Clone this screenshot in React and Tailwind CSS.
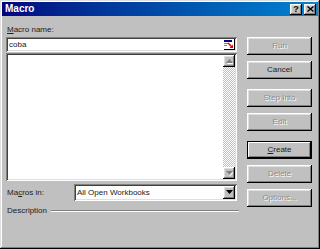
import React from "react";

const raised =
  "shadow-[inset_-1px_-1px_#000,inset_1px_1px_#fff,inset_-2px_-2px_#808080,inset_2px_2px_#dfdfdf]";
const sunken =
  "shadow-[inset_1px_1px_#808080,inset_-1px_-1px_#fff,inset_2px_2px_#404040,inset_-2px_-2px_#dfdfdf]";
const dis = "text-[#8c8c8c] [text-shadow:1px_1px_0_#fff]";

function Btn({ children, disabled, def, className = "" }) {
  const sh = def
    ? "shadow-[inset_0_0_0_1px_#000,inset_-2px_-2px_#000,inset_2px_2px_#fff,inset_-3px_-3px_#808080]"
    : raised;
  return (
    <div
      className={`w-[65px] h-[18px] flex items-center justify-center bg-[#c0c0c0] text-[8px] leading-none ${sh} ${
        disabled ? dis : "text-[#202020]"
      } ${className}`}
    >
      {children}
    </div>
  );
}

function Tri({ up, disabled }) {
  return (
    <svg width="7" height="5" viewBox="0 0 7 5" className="block">
      {disabled && (
        <path d={up ? "M4 1 L8 5 L1 5 Z" : "M1 1 L8 1 L4 5 Z"} fill="#fff" />
      )}
      <path
        d={up ? "M3.5 0 L7 4 L0 4 Z" : "M0 0 L7 0 L3.5 4 Z"}
        fill={disabled ? "#808080" : "#000"}
      />
    </svg>
  );
}

export default function App() {
  return (
    <div
      className={`w-[320px] h-[249px] bg-[#c0c0c0] p-[2px] text-[8px] text-[#202020] font-['Liberation_Sans',Arial,sans-serif] shadow-[inset_-1px_-1px_#000,inset_1px_1px_#dfdfdf,inset_-2px_-2px_#808080,inset_2px_2px_#fff]`}
    >
      {/* Title bar */}
      <div className="h-[14px] flex items-center bg-linear-to-r from-[#000080] to-[#1084d0]">
        <span className="pl-[3px] text-white font-bold text-[10px] leading-none">
          Macro
        </span>
        <div className="ml-auto mr-[2px] flex gap-[2px]">
          <div
            className={`w-[12px] h-[11px] bg-[#c0c0c0] flex items-center justify-center text-[9px] font-bold leading-none text-black ${raised}`}
          >
            ?
          </div>
          <div
            className={`w-[12px] h-[11px] bg-[#c0c0c0] flex items-center justify-center ${raised}`}
          >
            <svg width="7" height="6" viewBox="0 0 7 6" className="block">
              <path d="M0.5 0.5 L6.5 5.5 M6.5 0.5 L0.5 5.5" stroke="#000" strokeWidth="1.4" />
            </svg>
          </div>
        </div>
      </div>

      {/* Body */}
      <div className="flex pl-[4px] pt-[8px]">
        {/* Left column */}
        <div className="w-[231px] flex flex-col">
          <div className="h-[11px] leading-[11px] pl-[1px]">
            <u>M</u>acro name:
          </div>
          <div className={`mt-[2px] h-[15px] bg-white flex items-center pl-[3px] pr-[2px] ${sunken}`}>
            <span className="leading-none">coba</span>
            <div className="ml-auto w-[12px] h-[11px] bg-[#c0c0c0] flex items-center justify-center">
              <svg width="12" height="11" viewBox="0 0 12 11" className="block">
                <rect x="0" y="0" width="12" height="11" fill="#fff" />
                <rect x="1" y="1" width="8" height="2" fill="#000080" />
                <rect x="1" y="4" width="4" height="1" fill="#808080" />
                <rect x="1" y="6" width="3" height="1" fill="#808080" />
                <path d="M5 4 L9 8" stroke="#e00000" strokeWidth="1.5" />
                <path d="M10 9 L6.5 9 L10 5.5 Z" fill="#e00000" />
                <rect x="1" y="10" width="11" height="1" fill="#000" />
                <rect x="11" y="0" width="1" height="11" fill="#000" />
              </svg>
            </div>
          </div>
          {/* List */}
          <div className={`mt-[1px] h-[128px] bg-white flex justify-end p-[2px] ${sunken}`}>
            <div className="w-[12px] h-full flex flex-col bg-[image:repeating-conic-gradient(#c0c0c0_0_25%,#fff_0_50%)] bg-[length:2px_2px]">
              <div className={`w-[12px] h-[12px] bg-[#c0c0c0] flex items-center justify-center ${raised}`}>
                <Tri up disabled />
              </div>
              <div className="flex-1" />
              <div className={`w-[12px] h-[12px] bg-[#c0c0c0] flex items-center justify-center ${raised}`}>
                <Tri disabled />
              </div>
            </div>
          </div>
          {/* Macros in */}
          <div className="mt-[3px] h-[17px] flex items-center">
            <div className="w-[68px] pl-[1px] leading-none">
              Ma<u>c</u>ros in:
            </div>
            <div className={`flex-1 h-full bg-white flex items-center pl-[3px] pr-[2px] ${sunken}`}>
              <span className="leading-none">All Open Workbooks</span>
              <div className={`ml-auto w-[12px] h-[13px] bg-[#c0c0c0] flex items-center justify-center ${raised}`}>
                <Tri />
              </div>
            </div>
          </div>
          {/* Description */}
          <div className="mt-[4px] h-[12px] flex items-center mr-[-2px]">
            <span className="pl-[1px] leading-none">Description</span>
            <div className="ml-[4px] flex-1 h-[2px] border-t border-t-[#808080] border-b border-b-white" />
          </div>
        </div>

        {/* Right column */}
        <div className="ml-[10px] pt-[13px] flex flex-col">
          <Btn disabled>Run</Btn>
          <Btn className="mt-[6px]">Cancel</Btn>
          <Btn disabled className="mt-[10px]">
            Step Into
          </Btn>
          <Btn disabled className="mt-[6px]">
            Edit
          </Btn>
          <Btn def className="mt-[10px]">
            <u>C</u>reate
          </Btn>
          <Btn disabled className="mt-[6px]">
            Delete
          </Btn>
          <Btn disabled className="mt-[6px]">
            Options...
          </Btn>
        </div>
      </div>
    </div>
  );
}
